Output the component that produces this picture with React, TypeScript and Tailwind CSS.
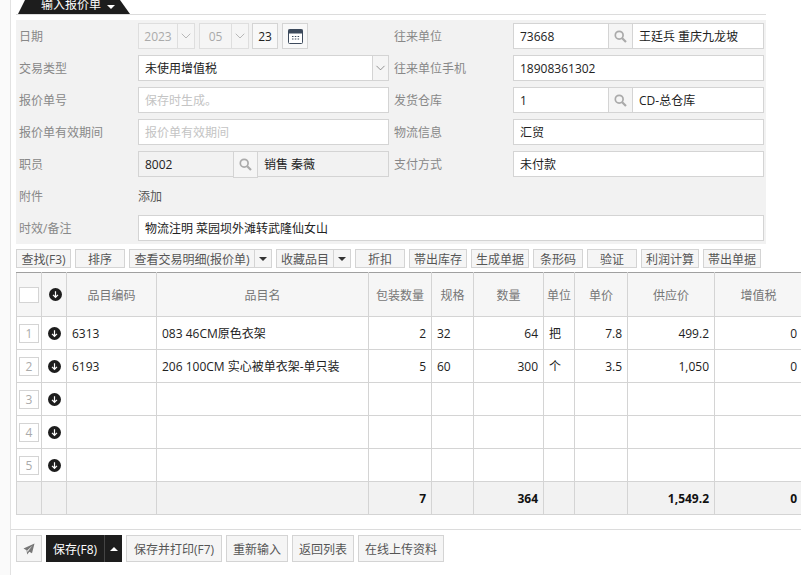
import { ChevronDown } from "lucide-react";
import type { ReactNode } from "react";

const font = "font-['Open_Sans','Noto_Sans_CJK_SC',sans-serif]";

const Caret = ({ up = false, color = "#333" }: { up?: boolean; color?: string }) => (
  <svg width="8" height="4" viewBox="0 0 8 4" className={up ? "rotate-180" : ""}>
    <polygon points="0,0 8,0 4,4" fill={color} />
  </svg>
);

const DownDot = () => (
  <svg width="13" height="13" viewBox="0 0 13 13" className="block">
    <circle cx="6.5" cy="6.5" r="6.5" fill="#1d1d1d" />
    <path d="M6.5 3.2v6M4 6.9l2.5 2.4L9 6.9" fill="none" stroke="#fff" strokeWidth="1.2" />
  </svg>
);

const SearchGlyph = () => (
  <svg width="13" height="13" viewBox="0 0 13 13">
    <circle cx="5.2" cy="5.2" r="3.9" fill="none" stroke="#aaa" strokeWidth="1.7" />
    <path d="M8.2 8.2l3.8 3.8" stroke="#aaa" strokeWidth="2.2" />
  </svg>
);

const Field = ({ label, children }: { label: string; children: ReactNode }) => (
  <div className="flex h-[26px] items-center">
    <div className="w-[122px] shrink-0 pl-[3px] pt-[2px] text-[#888]">{label}</div>
    {children}
  </div>
);

const TextBox = ({ value, hint }: { value?: string; hint?: string }) => (
  <div className={`flex h-[26px] w-[251px] items-center border border-[#d4d4d4] bg-white pl-[6px] pt-[2px] ${hint ? "text-[#c4c4c4]" : "text-[#222]"}`}>
    {value ?? hint}
  </div>
);

const Lookup = ({ code, name, gray = false }: { code: string; name: string; gray?: boolean }) => (
  <div className={`flex h-[26px] w-[251px] border border-[#d4d4d4] text-[#222] ${gray ? "bg-[#f2f2f2]" : "bg-white"}`}>
    <div className="flex w-[94px] items-center pl-[6px] pt-[2px]">{code}</div>
    <div className={`flex w-[25px] items-center justify-center border-x border-[#d4d4d4] bg-[#f5f5f5] ${gray ? "h-[26px] border-b" : ""}`}>
      <SearchGlyph />
    </div>
    <div className="flex flex-1 items-center pl-[6px] pt-[2px]">{name}</div>
  </div>
);

const DateSelect = ({ value, width }: { value: string; width: string }) => (
  <div className={`flex h-[26px] ${width} border border-[#dedede] bg-[#f5f5f5] text-[#aaa]`}>
    <div className="flex flex-1 items-center justify-center pt-[2px]">{value}</div>
    <div className="flex w-[17px] items-center justify-center border-l border-[#dedede]">
      <ChevronDown size={16} strokeWidth={1} color="#999" />
    </div>
  </div>
);

const ToolBtn = ({ label, width }: { label: string; width: string }) => (
  <button className={`flex h-[19px] ${width} items-center justify-center border border-[#d4d4d4] bg-[#f5f5f5] pt-[2px] text-[#555]`}>
    {label}
  </button>
);

const ToolSplit = ({ label, width }: { label: string; width: string }) => (
  <div className={`flex h-[19px] ${width} border border-[#d4d4d4] bg-[#f5f5f5] text-[#555]`}>
    <div className="flex flex-1 items-center justify-center pt-[2px]">{label}</div>
    <div className="flex w-[17px] items-center justify-center border-l border-[#d4d4d4]">
      <Caret />
    </div>
  </div>
);

const FootBtn = ({ label, width }: { label: string; width: string }) => (
  <button className={`flex h-[27px] ${width} items-center justify-center border border-[#d4d4d4] bg-[#f5f5f5] pt-[2px] text-[#555]`}>
    {label}
  </button>
);

const heads = ["品目编码", "品目名", "包装数量", "规格", "数量", "单位", "单价", "供应价", "增值税"];

const rows = [
  ["6313", "083 46CM原色衣架", "2", "32", "64", "把", "7.8", "499.2", "0"],
  ["6193", "206 100CM 实心被单衣架-单只装", "5", "60", "300", "个", "3.5", "1,050", "0"],
  ["", "", "", "", "", "", "", "", ""],
  ["", "", "", "", "", "", "", "", ""],
  ["", "", "", "", "", "", "", "", ""],
];

const cellAlign = ["text-left", "text-left", "text-right", "text-left", "text-right", "text-left", "text-right", "text-right", "text-right"];

const App = () => {
  return (
    <div className={`flex h-[575px] w-[801px] overflow-hidden bg-white text-[12px] leading-none ${font}`}>
      <div className="w-[11px] shrink-0 border-r border-[#e2e2e2] bg-[#fafafa]" />

      <div className="flex min-w-0 flex-1 flex-col">
        <div className="ml-[5px] h-[15px] w-[750px] border-b border-[#dcdcdc]">
          <div className="ml-[2px] flex h-[14px] w-[112px] items-center overflow-hidden bg-[#1d1d1d] pl-[23px] text-white [clip-path:polygon(7px_0,102px_0,100%_100%,0_100%)]">
            <span className="-mt-[4px]">输入报价单</span>
            <span className="-mt-[1px] ml-[6px]">
              <Caret color="#fff" />
            </span>
          </div>
        </div>

        <div className="ml-[5px] mt-[5px] grid w-[750px] grid-cols-2 gap-y-[6px] bg-[#f2f2f2] py-[3px]">
          <Field label="日期">
            <div className="flex">
              <DateSelect value="2023" width="w-[57px]" />
              <div className="ml-[4px]">
                <DateSelect value="05" width="w-[50px]" />
              </div>
              <div className="ml-[3px] flex h-[26px] w-[26px] items-center justify-center border border-[#d4d4d4] bg-[#f8f8f8] pt-[2px] text-[#222]">23</div>
              <div className="ml-[4px] flex h-[26px] w-[26px] items-center justify-center border border-[#d4d4d4] bg-[#f8f8f8]">
                <svg width="15" height="15" viewBox="0 0 15 15">
                  <rect x="0.5" y="0.5" width="14" height="14" rx="1" fill="#fff" stroke="#3d4a5c" />
                  <rect x="0.5" y="0.5" width="14" height="4" fill="#3d4a5c" />
                  <path d="M4 7.5h1.5M6.8 7.5h1.5M9.6 7.5h1.5M4 10h1.5M6.8 10h1.5M9.6 10h1.5" stroke="#3d4a5c" strokeWidth="1.2" />
                </svg>
              </div>
            </div>
          </Field>
          <Field label="往来单位">
            <Lookup code="73668" name="王廷兵 重庆九龙坡" />
          </Field>

          <Field label="交易类型">
            <div className="flex h-[26px] w-[251px] border border-[#d4d4d4] bg-white text-[#222]">
              <div className="flex flex-1 items-center pl-[6px] pt-[2px]">未使用增值税</div>
              <div className="flex w-[16px] items-center justify-center border-l border-[#d4d4d4] bg-[#f5f5f5]">
                <ChevronDown size={16} strokeWidth={1} color="#555" />
              </div>
            </div>
          </Field>
          <Field label="往来单位手机">
            <TextBox value="18908361302" />
          </Field>

          <Field label="报价单号">
            <TextBox hint="保存时生成。" />
          </Field>
          <Field label="发货仓库">
            <Lookup code="1" name="CD-总仓库" />
          </Field>

          <Field label="报价单有效期间">
            <TextBox hint="报价单有效期间" />
          </Field>
          <Field label="物流信息">
            <TextBox value="汇贸" />
          </Field>

          <Field label="职员">
            <Lookup code="8002" name="销售 秦薇" gray />
          </Field>
          <Field label="支付方式">
            <TextBox value="未付款" />
          </Field>

          <div className="col-span-2 flex h-[26px] items-center pt-[1px]">
            <div className="w-[122px] pl-[3px] text-[#888]">附件</div>
            <span className="text-[#555]">添加</span>
          </div>

          <div className="col-span-2 flex h-[26px] items-center">
            <div className="w-[122px] shrink-0 pl-[3px] pt-[2px] text-[#888]">时效/备注</div>
            <div className="flex h-[26px] w-[626px] items-center border border-[#d4d4d4] bg-white pl-[6px] pt-[2px] text-[#222]">物流注明 菜园坝外滩转武隆仙女山</div>
          </div>
        </div>

        <div className="ml-[5px] mt-[5px] flex gap-x-[4px]">
          <ToolBtn label="查找(F3)" width="w-[55px]" />
          <ToolBtn label="排序" width="w-[50px]" />
          <ToolSplit label="查看交易明细(报价单)" width="w-[143px]" />
          <ToolSplit label="收藏品目" width="w-[75px]" />
          <ToolBtn label="折扣" width="w-[50px]" />
          <ToolBtn label="帯出库存" width="w-[58px]" />
          <ToolBtn label="生成单据" width="w-[58px]" />
          <ToolBtn label="条形码" width="w-[50px]" />
          <ToolBtn label="验证" width="w-[50px]" />
          <ToolBtn label="利润计算" width="w-[58px]" />
          <ToolBtn label="帯出单据" width="w-[58px]" />
        </div>

        <div className="ml-[5px] mt-[4px] overflow-hidden">
          <table className="w-[786px] table-fixed border-collapse">
            <colgroup>
              <col className="w-[25px]" />
              <col className="w-[25px]" />
              <col className="w-[90px]" />
              <col className="w-[212px]" />
              <col className="w-[63px]" />
              <col className="w-[42px]" />
              <col className="w-[70px]" />
              <col className="w-[31px]" />
              <col className="w-[53px]" />
              <col className="w-[87px]" />
              <col className="w-[88px]" />
            </colgroup>
            <thead>
              <tr className="h-[44px] bg-[#f6f6f6]">
                <th className="border border-[#d4d4d4] border-t-[#a0a0a0] p-0">
                  <div className="ml-[2px] mt-[1px] h-[16px] w-[20px] border border-[#d4d4d4] bg-white" />
                </th>
                <th className="border border-[#d4d4d4] border-t-[#a0a0a0] p-0">
                  <div className="flex justify-center pl-[2px]">
                    <DownDot />
                  </div>
                </th>
                {heads.map((h) => (
                  <th key={h} className="border border-[#d4d4d4] border-t-[#a0a0a0] p-0 pt-[2px] text-center font-normal text-[#777]">
                    {h}
                  </th>
                ))}
              </tr>
            </thead>
            <tbody>
              {rows.map((row, i) => (
                <tr key={i} className="h-[33px]">
                  <td className="border border-[#d4d4d4] p-0">
                    <div className="ml-[2px] mt-[1px] flex h-[19px] w-[20px] items-center justify-center border border-[#d4d4d4] bg-white text-[#aaa]">{i + 1}</div>
                  </td>
                  <td className="border border-[#d4d4d4] p-0">
                    <div className="flex justify-center">
                      <DownDot />
                    </div>
                  </td>
                  {row.map((val, j) => (
                    <td key={j} className={`border border-[#d4d4d4] px-[5px] pb-0 pt-[2px] text-[#222] ${cellAlign[j]}`}>
                      {val}
                    </td>
                  ))}
                </tr>
              ))}
              <tr className="h-[33px] bg-[#f2f2f2] font-bold text-[#111]">
                <td className="border border-[#d4d4d4]" />
                <td className="border border-[#d4d4d4]" />
                <td className="border border-[#d4d4d4]" />
                <td className="border border-[#d4d4d4]" />
                <td className="border border-[#d4d4d4] px-[5px] pt-[2px] text-right">7</td>
                <td className="border border-[#d4d4d4]" />
                <td className="border border-[#d4d4d4] px-[5px] pt-[2px] text-right">364</td>
                <td className="border border-[#d4d4d4]" />
                <td className="border border-[#d4d4d4]" />
                <td className="border border-[#d4d4d4] px-[5px] pt-[2px] text-right">1,549.2</td>
                <td className="border border-[#d4d4d4] px-[5px] pt-[2px] text-right">0</td>
              </tr>
            </tbody>
          </table>
        </div>

        <div className="mt-[14px] flex gap-x-[4px] border-t border-[#dcdcdc] pl-[5px] pt-[5px]">
          <button className="flex h-[27px] w-[26px] items-center justify-center border border-[#d4d4d4] bg-[#f5f5f5]">
            <svg width="12" height="12" viewBox="0 0 12 12">
              <path d="M11.5 0.5L0.5 5.5L3.5 7.2L4.2 11.5L6.3 8.8L9 10.2Z" fill="#777" />
              <path d="M9.6 2.4L4.2 7.4L4.8 9.4L5.4 7.8Z" fill="#f5f5f5" />
            </svg>
          </button>
          <div className="flex h-[27px] w-[76px] bg-[#1d1d1d] text-white">
            <div className="flex flex-1 items-center justify-center pt-[2px]">保存(F8)</div>
            <div className="flex w-[18px] items-center justify-center border-l border-[#444]">
              <Caret up color="#fff" />
            </div>
          </div>
          <FootBtn label="保存并打印(F7)" width="w-[96px]" />
          <FootBtn label="重新输入" width="w-[62px]" />
          <FootBtn label="返回列表" width="w-[62px]" />
          <FootBtn label="在线上传资料" width="w-[86px]" />
        </div>
      </div>
    </div>
  );
};

export default App;
